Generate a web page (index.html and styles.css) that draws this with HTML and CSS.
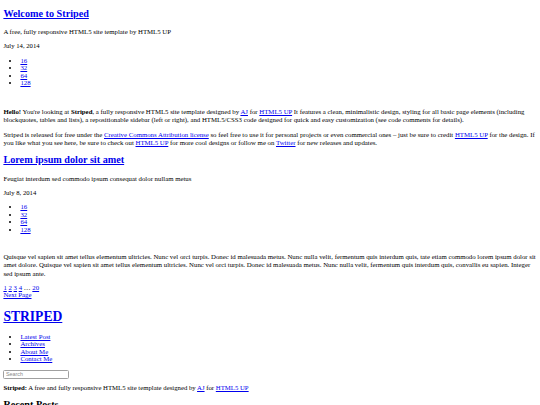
FILE: index.html
```html
<!DOCTYPE html>
<html>
<head>
<meta charset="utf-8">
<title>Striped</title>
<link rel="stylesheet" href="styles.css">
</head>
<body class="body">
<div class="wrapper">
  <div class="content">
    <article class="post">
      <header class="post-header">
        <h2 class="post-title title-first"><a href="#">Welcome to Striped</a></h2>
        <p class="byline">A free, fully responsive HTML5 site template by HTML5 UP</p>
      </header>
      <div class="info">
        <span class="date">July 14, 2014</span>
        <ul class="stats">
          <li><a href="#">16</a></li>
          <li><a href="#">32</a></li>
          <li><a href="#">64</a></li>
          <li><a href="#">128</a></li>
        </ul>
      </div>
      <p class="text text-lead text-first"><strong>Hello!</strong> You're looking at <strong>Striped</strong>, a fully responsive HTML5 site template designed by <a href="#">AJ</a> for <a href="#">HTML5 UP</a> It features a clean, minimalistic design, styling for all basic page elements (including blockquotes, tables and lists), a repositionable sidebar (left or right), and HTML5/CSS3 code designed for quick and easy customization (see code comments for details).</p>
      <p class="text text-next">Striped is released for free under the <a href="#">Creative Commons Attribution license</a> so feel free to use it for personal projects or even commercial ones – just be sure to credit <a href="#">HTML5 UP</a> for the design. If you like what you see here, be sure to check out <a href="#">HTML5 UP</a> for more cool designs or follow me on <a href="#">Twitter</a> for new releases and updates.</p>
    </article>
    <article class="post">
      <header class="post-header">
        <h2 class="post-title title-next"><a href="#">Lorem ipsum dolor sit amet</a></h2>
        <p class="byline">Feugiat interdum sed commodo ipsum consequat dolor nullam metus</p>
      </header>
      <div class="info">
        <span class="date">July 8, 2014</span>
        <ul class="stats">
          <li><a href="#">16</a></li>
          <li><a href="#">32</a></li>
          <li><a href="#">64</a></li>
          <li><a href="#">128</a></li>
        </ul>
      </div>
      <p class="text text-lead">Quisque vel sapien sit amet tellus elementum ultricies. Nunc vel orci turpis. Donec id malesuada metus. Nunc nulla velit, fermentum quis interdum quis, tate etiam commodo lorem ipsum dolor sit amet dolore. Quisque vel sapien sit amet tellus elementum ultricies. Nunc vel orci turpis. Donec id malesuada metus. Nunc nulla velit, fermentum quis interdum quis, convallis eu sapien. Integer sed ipsum ante.</p>
    </article>
    <div class="pagination">
      <div class="pages">
        <a href="#">1</a>
        <a href="#">2</a>
        <a href="#">3</a>
        <a href="#">4</a>
        <span>…</span>
        <a href="#">20</a>
      </div>
      <a href="#" class="next">Next Page</a>
    </div>
  </div>
  <div class="sidebar">
    <h1 class="logo"><a href="#">STRIPED</a></h1>
    <nav class="nav">
      <ul class="nav-list">
        <li><a href="#">Latest Post</a></li>
        <li><a href="#">Archives</a></li>
        <li><a href="#">About Me</a></li>
        <li><a href="#">Contact Me</a></li>
      </ul>
    </nav>
    <section class="search">
      <form><input type="text" class="search-input" placeholder="Search"></form>
    </section>
    <section class="text-style">
      <p class="text text-side"><strong>Striped:</strong> A free and fully responsive HTML5 site template designed by <a href="#">AJ</a> for <a href="#">HTML5 UP</a></p>
    </section>
    <section class="recent">
      <h2 class="recent-title">Recent Posts</h2>
    </section>
  </div>
</div>
</body>
</html>
```

FILE: styles.css
```css
html {
  background: #ffffff;
}

.body {
  margin: 0;
  padding: 0 3.4px;
  font-family: "Liberation Serif", "Times New Roman", serif;
  font-size: 6.8px;
  color: #000000;
}

.body a {
  color: #0000ee;
}

.post-title,
.recent-title {
  margin: 0;
  font-size: 10.2px;
  line-height: 12px;
  font-weight: bold;
}

.title-first {
  padding-top: 8px;
}

.title-next {
  margin-top: 6.4px;
}

.byline {
  margin: 7.2px 0 0;
  font-size: 6.8px;
  line-height: 9px;
}

.info {
  margin-top: 6px;
  line-height: 7.5px;
}

.date {
  display: block;
  font-size: 6.7px;
}

.stats,
.nav-list {
  margin: 7.2px 0 0;
  padding-left: 17px;
  line-height: 7.5px;
}

.stats {
  margin-top: 7px;
}

.text {
  margin: 0;
  font-size: 6.8px;
  line-height: 8.6px;
}

.text-side {
  font-size: 6.75px;
}

.text-lead {
  margin-top: 19.4px;
}

.text-first {
  margin-top: 20.9px;
}

.text-next {
  margin-top: 6.1px;
}

.pagination {
  margin-top: 5.25px;
  line-height: 7.5px;
}

.logo {
  margin: 10px 0 0;
  font-size: 13.6px;
  line-height: 15.6px;
  font-weight: bold;
}

.nav-list {
  margin-top: 8.45px;
}

.search {
  margin-top: 7px;
  line-height: 0;
}

.search-input {
  box-sizing: border-box;
  width: 66px;
  height: 9px;
  margin: 0;
  padding: 0 1.5px;
  border: 1px solid #a0a0a0;
  border-radius: 1.5px;
  font-family: "Liberation Sans", Arial, sans-serif;
  font-size: 5.4px;
  background: #ffffff;
}

.search-input::placeholder {
  color: #8a8a8a;
}

.text-style {
  margin-top: 5.7px;
}

.recent {
  margin-top: 6.4px;
}
```
